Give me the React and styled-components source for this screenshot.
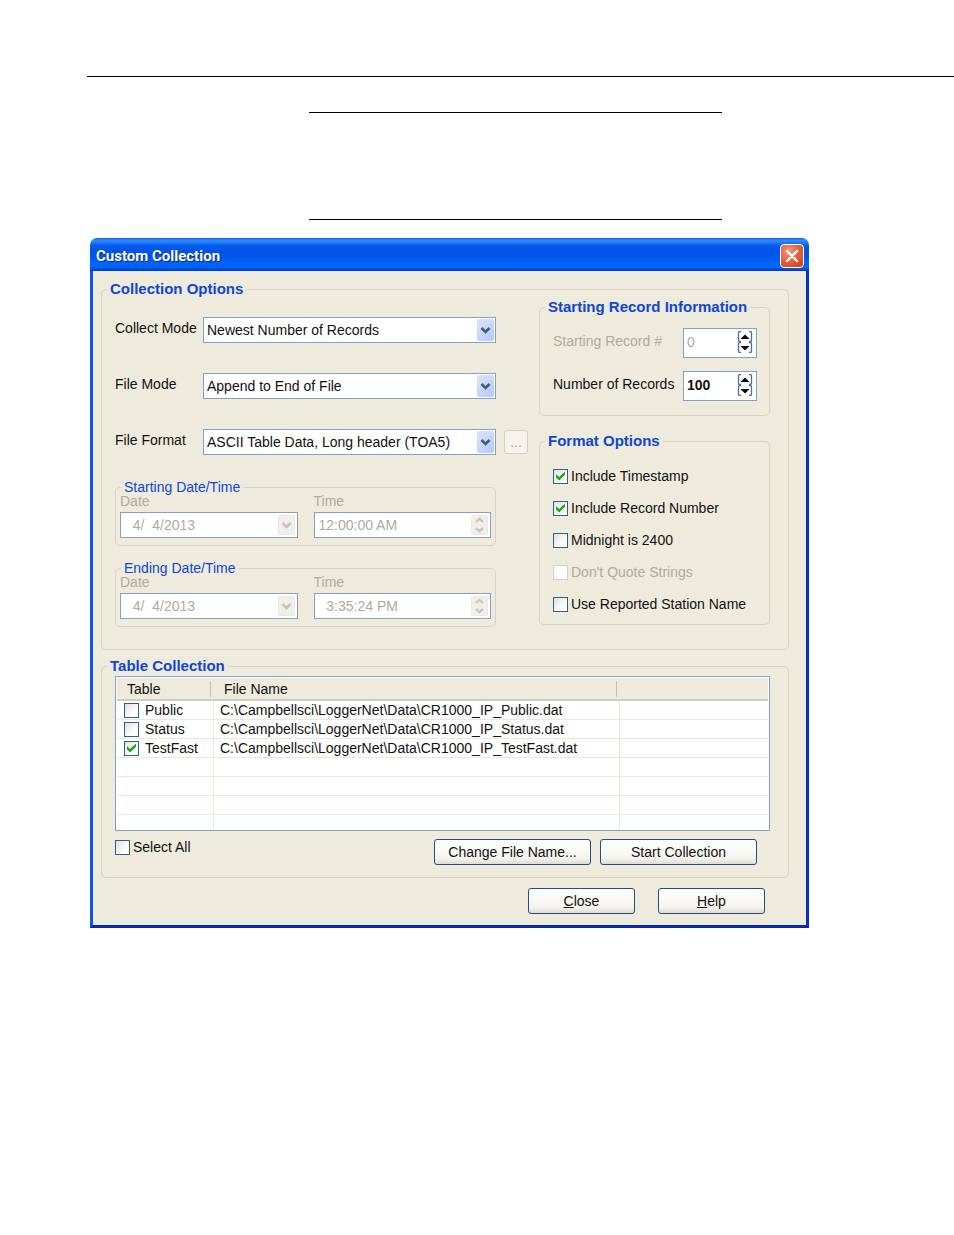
import React from "react";
import styled, { createGlobalStyle, css } from "styled-components";

const font = '"Liberation Sans", Arial, sans-serif';
const face = "#eeebdd";
const line = "#d8d4c3";
const fieldBorder = "#7fa1cb";
const muted = "#aeaa9e";
const heading = "#0f46d6";

const GlobalStyle = createGlobalStyle`
  *, *::before, *::after { box-sizing: border-box; }
  body {
    margin: 0;
    background: #fff;
    color: #111;
    font: 14px/16px ${font};
  }
  input, select, button { font: inherit; color: inherit; margin: 0; }
`;

const Page = styled.main`
  padding: 76px 0 40px;
`;

const PageRule = styled.hr`
  margin: 0 0 0 87px;
  border: 0;
  border-top: 1px solid #000;
`;

const Note = styled.aside`
  height: 108px;
  margin: 35px 232px 18px 309px;
  border: solid #000;
  border-width: 1px 0;
`;

const Dialog = styled.section`
  margin: 0 145px 0 90px;
`;

const TitleBar = styled.header`
  display: flex;
  align-items: center;
  justify-content: space-between;
  height: 33px;
  padding: 2px 5px 0 6px;
  border-radius: 7px 7px 0 0;
  background: linear-gradient(
    #0a5be6 0,
    #2f8bff 2px,
    #2382fb 4px,
    #0a5df0 7px,
    #0254e6 12px,
    #0055ea 18px,
    #0064fb 24px,
    #0066ff 29px,
    #0050e0 31px,
    #0038bd 33px
  );
`;

const Title = styled.h1`
  margin: 0;
  color: #fff;
  font: bold 15px/18px Roboto, ${font};
  text-shadow: 1px 1px 1px #0a2a80;
`;

const CloseButton = styled.button`
  display: grid;
  place-items: center;
  width: 24px;
  height: 24px;
  padding: 0;
  border: 1px solid #fff;
  border-radius: 4px;
  background: radial-gradient(circle at 35% 30%, #f09a80, #e2603c 50%, #cf3c14);
`;

const Body = styled.form`
  padding: 9px 17px 11px 8px;
  border: solid #0a55e8;
  border-width: 0 3px 3px;
  border-right-color: #0a2fc8;
  border-bottom-color: #0628b4;
  background: ${face};
`;

const Group = styled.fieldset`
  min-width: 0;
  margin: 0;
  padding: 0 18px 12px 5px;
  border: 1px solid ${line};
  border-radius: 5px;
`;

const Legend = styled.legend`
  height: 18px;
  padding: 0 3px;
  color: ${heading};
  font: bold 15px/18px ${font};
`;

const OptionsGroup = styled(Group)`
  padding-bottom: 22px;
`;

const OptionsGrid = styled.div`
  display: grid;
  grid-template-columns: minmax(0, 1fr) 231px;
  column-gap: 11px;
  padding-left: 8px;
`;

const LeftColumn = styled.div`
  display: flex;
  flex-direction: column;
  padding-top: 19px;
`;

const FieldRows = styled.div`
  display: flex;
  flex-direction: column;
  gap: 30px;
  margin-bottom: 25px;
`;

const FieldRow = styled.div`
  display: flex;
  align-items: center;
  height: 26px;
`;

const FieldLabel = styled.label`
  flex: 0 0 88px;
  padding-bottom: 4px;
`;

const RowEnd = styled.div`
  display: flex;
  flex: 0 0 32px;
  justify-content: flex-end;
`;

const ComboBox = styled.div`
  position: relative;
  flex: 1;
  min-width: 0;
`;

const fieldBox = css`
  display: block;
  width: 100%;
  height: 26px;
  padding: 0 22px 0 3px;
  border: 1px solid ${fieldBorder};
  border-radius: 0;
  background: #fff;
  appearance: none;
  outline: 0;

  &:disabled {
    color: ${muted};
    opacity: 1;
  }
`;

const Select = styled.select`
  ${fieldBox}
`;

const TextField = styled.input`
  ${fieldBox}
  padding-left: 4px;
`;

const DropArrow = styled.span`
  position: absolute;
  top: 2px;
  right: 2px;
  bottom: 2px;
  display: grid;
  place-items: center;
  width: 17px;
  border-radius: 2px;
  background: linear-gradient(135deg, #dbe4ff, #b6c8f6);
  color: #44567f;
  pointer-events: none;
`;

const FadedArrow = styled(DropArrow)`
  top: 3px;
  right: 3px;
  bottom: 3px;
  background: #f1efe8;
  border: 1px solid #ebe8df;
  color: #c6c2b7;
`;

const BrowseButton = styled.button`
  width: 24px;
  height: 24px;
  padding: 0;
  border: 1px solid #d3cfc2;
  border-radius: 3px;
  background: #f5f3ec;

  &:disabled { color: ${muted}; }
`;

const DateGroups = styled.div`
  display: flex;
  flex-direction: column;
  gap: 15px;
  margin-right: 32px;
`;

const DateGroup = styled(Group)`
  padding: 0 4px 7px;
`;

const DateLegend = styled.legend`
  height: 14px;
  margin-left: 1px;
  padding: 0 3px;
  color: ${heading};
  font: 14px/14px ${font};
`;

const DateFields = styled.div`
  display: flex;
  gap: 16px;
`;

const DateField = styled.label`
  display: flex;
  flex: 1;
  flex-direction: column;
  gap: 4px;
  color: ${muted};
  line-height: 14px;
`;

const DateBox = styled.span`
  position: relative;
`;

const RightColumn = styled.div`
  display: flex;
  flex-direction: column;
  gap: 16px;
`;

const RecordGroup = styled(Group)`
  padding: 0 12px 14px 5px;
`;

const RecordRows = styled.div`
  display: flex;
  flex-direction: column;
  gap: 13px;
  padding: 12px 0 0 8px;
`;

const RecordRow = styled.div`
  display: flex;
  align-items: center;
  justify-content: space-between;
`;

const RecordLabel = styled.label`
  padding-bottom: 5px;
  color: ${(p) => (p.$muted ? muted : "inherit")};
`;

const SpinBox = styled.div`
  display: flex;
  align-items: center;
  width: 74px;
  height: 30px;
  padding: 0 3px 2px;
  border: 1px solid ${fieldBorder};
  background: #fff;
`;

const SpinInput = styled.input`
  flex: 1;
  min-width: 0;
  padding: 0;
  border: 0;
  outline: 0;
  background: transparent;
  font-weight: ${(p) => (p.disabled ? "normal" : "bold")};

  &:disabled { color: ${muted}; }
`;

const SpinButtons = styled.div`
  display: flex;
  flex-direction: column;
`;

const SpinButton = styled.button`
  display: block;
  width: 16px;
  height: 11px;
  padding: 0;
  border: 0;
  background: #fff;

  svg { display: block; }
`;

const FormatGroup = styled(Group)`
  padding: 0 5px 12px;
`;

const CheckList = styled.div`
  display: flex;
  flex-direction: column;
  gap: 16px;
  padding: 18px 0 0 8px;
`;

const CheckLabel = styled.label`
  display: flex;
  align-items: center;
  gap: ${(p) => p.$gap || 3}px;
  height: 16px;
  color: ${(p) => (p.$muted ? muted : "inherit")};
`;

const CheckBox = styled.input`
  display: grid;
  flex: none;
  place-items: center;
  width: 15px;
  height: 15px;
  border: 1px solid #2a5f96;
  background: linear-gradient(135deg, #e2e0db, #fff 70%);
  appearance: none;

  &:checked::after {
    content: "";
    width: 9px;
    height: 9px;
    background: #21a121;
    clip-path: polygon(0 30%, 35% 62%, 100% 0, 100% 35%, 35% 100%, 0 66%);
  }

  &:disabled {
    border-color: #d3d0c4;
    background: #fff;
  }
`;

const TableGroup = styled(Group)`
  margin-top: 7px;
`;

const TablePanel = styled.div`
  padding: 1px 0 0 8px;
`;

const TableFrame = styled.div`
  height: 155px;
  overflow: hidden;
  padding: 1px 1px 0;
  border: 1px solid ${fieldBorder};
  background: #fff;
`;

const Table = styled.table`
  width: 100%;
  table-layout: fixed;
  border-collapse: separate;
  border-spacing: 0;
`;

const NameCol = styled.col`
  width: 97px;
`;

const SpareCol = styled.col`
  width: 148px;
`;

const HeadCell = styled.th`
  height: 23px;
  padding: 0 3px 0 10px;
  border-bottom: 2px solid #d2cebd;
  background: ${face};
  font-weight: normal;
  text-align: left;
`;

const HeadText = styled.span`
  display: block;
  height: 16px;
  border-right: ${(p) => (p.$last ? "0" : "1px solid #c3bfb1")};
`;

const Row = styled.tr`
  height: 19px;
`;

const Cell = styled.td`
  height: 19px;
  padding: 0 6px;
  border: solid #ebe8da;
  border-width: 0 1px 1px 0;
  white-space: nowrap;

  &:first-child { padding-left: 7px; }
  &:last-child { border-right: 0; }
`;

const TableFooter = styled.div`
  display: flex;
  align-items: flex-start;
  justify-content: space-between;
  margin: 8px 13px 0 0;
`;

const TableButtons = styled.div`
  display: flex;
  gap: 9px;
`;

const PushButton = styled.button`
  width: ${(p) => (p.$wide ? 157 : 107)}px;
  height: 26px;
  padding: 0;
  border: 1px solid #1f4f85;
  border-radius: 3px;
  background: linear-gradient(#fefefd, #f5f4ef 75%, #e0dccf);
`;

const DialogButtons = styled.footer`
  display: flex;
  justify-content: flex-end;
  gap: 23px;
  margin: 10px 24px 0 0;
`;

const Chevron = () => (
  <svg width="11" height="9" viewBox="0 0 11 9" aria-hidden="true">
    <path d="M1.5 2 5.5 6 9.5 2" fill="none" stroke="currentColor" strokeWidth="2.6" />
  </svg>
);

const UpDown = () => (
  <svg width="9" height="16" viewBox="0 0 9 16" aria-hidden="true">
    <path d="M1 5 4.5 1.8 8 5M1 11 4.5 14.2 8 11" fill="none" stroke="currentColor" strokeWidth="2.2" />
  </svg>
);

const Cross = () => (
  <svg width="14" height="14" viewBox="0 0 14 14" aria-hidden="true">
    <path d="M2 2 12 12M12 2 2 12" stroke="#fff" strokeWidth="2.4" strokeLinecap="round" />
  </svg>
);

const SpinArrow = ({ down }) => (
  <svg width="16" height="11" viewBox="0 0 16 11" aria-hidden="true">
    <path
      d="M4 .5H2.500Q1.500 .5 1.500 2V9Q1.500 10.500 2.500 10.500H4M12 .5H13.500Q14.500 .5 14.500 2V9Q14.500 10.500 13.500 10.500H12"
      fill="none"
      stroke="#4c7396"
      strokeWidth="1.3"
    />
    <path d={down ? "M3.500 4H12.500L8 8.500Z" : "M3.500 8H12.500L8 3.500Z"} fill="#000" />
  </svg>
);

const combos = [
  { id: "collect-mode", label: "Collect Mode", value: "Newest Number of Records" },
  { id: "file-mode", label: "File Mode", value: "Append to End of File" },
  { id: "file-format", label: "File Format", value: "ASCII Table Data, Long header (TOA5)", browse: true },
];

const dateGroups = [
  { title: "Starting Date/Time", date: "  4/  4/2013", time: "12:00:00 AM" },
  { title: "Ending Date/Time", date: "  4/  4/2013", time: "  3:35:24 PM" },
];

const records = [
  { id: "starting-record", label: "Starting Record #", value: "0", disabled: true },
  { id: "record-count", label: "Number of Records", value: "100", disabled: false },
];

const formats = [
  { label: "Include Timestamp", checked: true },
  { label: "Include Record Number", checked: true },
  { label: "Midnight is 2400" },
  { label: "Don't Quote Strings", disabled: true },
  { label: "Use Reported Station Name" },
];

const tables = [
  { name: "Public", file: "C:\\Campbellsci\\LoggerNet\\Data\\CR1000_IP_Public.dat" },
  { name: "Status", file: "C:\\Campbellsci\\LoggerNet\\Data\\CR1000_IP_Status.dat" },
  { name: "TestFast", file: "C:\\Campbellsci\\LoggerNet\\Data\\CR1000_IP_TestFast.dat", checked: true },
];

const blankRows = [0, 1, 2, 3];

export default function App() {
  return (
    <>
      <GlobalStyle />
      <Page>
        <PageRule />
        <Note />
        <Dialog aria-labelledby="dialog-title">
          <TitleBar>
            <Title id="dialog-title">Custom Collection</Title>
            <CloseButton type="button" aria-label="Close window">
              <Cross />
            </CloseButton>
          </TitleBar>
          <Body onSubmit={(e) => e.preventDefault()}>
            <OptionsGroup>
              <Legend>Collection Options</Legend>
              <OptionsGrid>
                <LeftColumn>
                  <FieldRows>
                    {combos.map((c) => (
                      <FieldRow key={c.id}>
                        <FieldLabel htmlFor={c.id}>{c.label}</FieldLabel>
                        <ComboBox>
                          <Select id={c.id}>
                            <option>{c.value}</option>
                          </Select>
                          <DropArrow>
                            <Chevron />
                          </DropArrow>
                        </ComboBox>
                        <RowEnd>
                          {c.browse && (
                            <BrowseButton type="button" disabled aria-label="Browse file format">
                              ...
                            </BrowseButton>
                          )}
                        </RowEnd>
                      </FieldRow>
                    ))}
                  </FieldRows>
                  <DateGroups>
                    {dateGroups.map((g) => (
                      <DateGroup key={g.title}>
                        <DateLegend>{g.title}</DateLegend>
                        <DateFields>
                          <DateField>
                            Date
                            <DateBox>
                              <TextField disabled defaultValue={g.date} />
                              <FadedArrow>
                                <Chevron />
                              </FadedArrow>
                            </DateBox>
                          </DateField>
                          <DateField>
                            Time
                            <DateBox>
                              <TextField disabled defaultValue={g.time} />
                              <FadedArrow>
                                <UpDown />
                              </FadedArrow>
                            </DateBox>
                          </DateField>
                        </DateFields>
                      </DateGroup>
                    ))}
                  </DateGroups>
                </LeftColumn>
                <RightColumn>
                  <RecordGroup>
                    <Legend>Starting Record Information</Legend>
                    <RecordRows>
                      {records.map((r) => (
                        <RecordRow key={r.id}>
                          <RecordLabel htmlFor={r.id} $muted={r.disabled}>
                            {r.label}
                          </RecordLabel>
                          <SpinBox>
                            <SpinInput id={r.id} defaultValue={r.value} disabled={r.disabled} />
                            <SpinButtons>
                              <SpinButton type="button" aria-label="Increase" disabled={r.disabled}>
                                <SpinArrow />
                              </SpinButton>
                              <SpinButton type="button" aria-label="Decrease" disabled={r.disabled}>
                                <SpinArrow down />
                              </SpinButton>
                            </SpinButtons>
                          </SpinBox>
                        </RecordRow>
                      ))}
                    </RecordRows>
                  </RecordGroup>
                  <FormatGroup>
                    <Legend>Format Options</Legend>
                    <CheckList>
                      {formats.map((f) => (
                        <CheckLabel key={f.label} $muted={f.disabled}>
                          <CheckBox type="checkbox" defaultChecked={f.checked} disabled={f.disabled} />
                          {f.label}
                        </CheckLabel>
                      ))}
                    </CheckList>
                  </FormatGroup>
                </RightColumn>
              </OptionsGrid>
            </OptionsGroup>

            <TableGroup>
              <Legend>Table Collection</Legend>
              <TablePanel>
                <TableFrame>
                  <Table>
                    <colgroup>
                      <NameCol />
                      <col />
                      <SpareCol />
                    </colgroup>
                    <thead>
                      <tr>
                        <HeadCell>
                          <HeadText>Table</HeadText>
                        </HeadCell>
                        <HeadCell>
                          <HeadText>File Name</HeadText>
                        </HeadCell>
                        <HeadCell>
                          <HeadText $last />
                        </HeadCell>
                      </tr>
                    </thead>
                    <tbody>
                      {tables.map((t) => (
                        <Row key={t.name}>
                          <Cell>
                            <CheckLabel $gap={6}>
                              <CheckBox type="checkbox" defaultChecked={t.checked} />
                              {t.name}
                            </CheckLabel>
                          </Cell>
                          <Cell>{t.file}</Cell>
                          <Cell />
                        </Row>
                      ))}
                      {blankRows.map((n) => (
                        <Row key={n}>
                          <Cell />
                          <Cell />
                          <Cell />
                        </Row>
                      ))}
                    </tbody>
                  </Table>
                </TableFrame>
                <TableFooter>
                  <CheckLabel>
                    <CheckBox type="checkbox" />
                    Select All
                  </CheckLabel>
                  <TableButtons>
                    <PushButton type="button" $wide>
                      Change File Name...
                    </PushButton>
                    <PushButton type="button" $wide>
                      Start Collection
                    </PushButton>
                  </TableButtons>
                </TableFooter>
              </TablePanel>
            </TableGroup>

            <DialogButtons>
              <PushButton type="button">
                <u>C</u>lose
              </PushButton>
              <PushButton type="button">
                <u>H</u>elp
              </PushButton>
            </DialogButtons>
          </Body>
        </Dialog>
      </Page>
    </>
  );
}
